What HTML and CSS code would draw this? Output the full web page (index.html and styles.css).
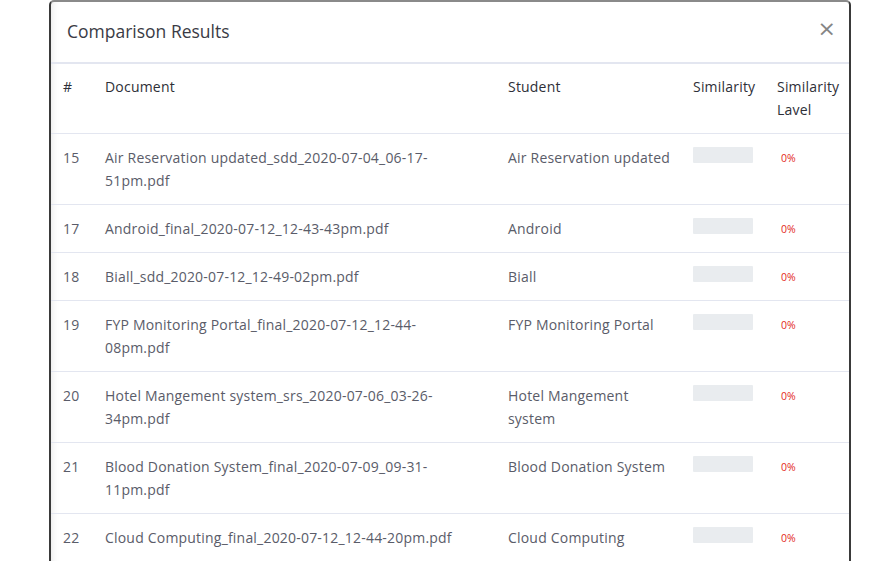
FILE: index.html
```html
<!DOCTYPE html>
<html>
<head>
<meta charset="utf-8">
<link rel="stylesheet" href="styles.css">
</head>
<body>
<div class="modal">
  <div class="modal-header">
    <h5 class="modal-title">Comparison Results</h5>
    <button class="close" type="button">&times;</button>
  </div>
  <table class="results">
    <colgroup>
      <col class="c-num"><col class="c-doc"><col class="c-stu"><col class="c-sim"><col class="c-lvl">
    </colgroup>
    <thead>
      <tr><th>#</th><th>Document</th><th>Student</th><th>Similarity</th><th>Similarity Lavel</th></tr>
    </thead>
    <tbody>
      <tr><td>15</td><td class="doc">Air Reservation updated_sdd_2020-07-04_06-17-51pm.pdf</td><td class="stu">Air Reservation updated</td><td><div class="bar"></div></td><td><div class="pct">0%</div></td></tr>
      <tr><td>17</td><td class="doc">Android_final_2020-07-12_12-43-43pm.pdf</td><td class="stu">Android</td><td><div class="bar"></div></td><td><div class="pct">0%</div></td></tr>
      <tr><td>18</td><td class="doc">Biall_sdd_2020-07-12_12-49-02pm.pdf</td><td class="stu">Biall</td><td><div class="bar"></div></td><td><div class="pct">0%</div></td></tr>
      <tr><td>19</td><td class="doc">FYP Monitoring Portal_final_2020-07-12_12-44-08pm.pdf</td><td class="stu">FYP Monitoring Portal</td><td><div class="bar"></div></td><td><div class="pct">0%</div></td></tr>
      <tr><td>20</td><td class="doc">Hotel Mangement system_srs_2020-07-06_03-26-34pm.pdf</td><td class="stu">Hotel Mangement system</td><td><div class="bar"></div></td><td><div class="pct">0%</div></td></tr>
      <tr><td>21</td><td class="doc">Blood Donation System_final_2020-07-09_09-31-11pm.pdf</td><td class="stu">Blood Donation System</td><td><div class="bar"></div></td><td><div class="pct">0%</div></td></tr>
      <tr><td>22</td><td class="doc">Cloud Computing_final_2020-07-12_12-44-20pm.pdf</td><td class="stu">Cloud Computing</td><td><div class="bar"></div></td><td><div class="pct">0%</div></td></tr>
    </tbody>
  </table>
</div>
</body>
</html>
```
FILE: styles.css
```css
html, body {
  margin: 0;
  padding: 0;
  background: #fff;
  overflow: hidden;
}
body {
  font-family: "Open Sans", "Liberation Sans", sans-serif;
  color: #5a5c69;
}
.modal {
  margin-left: 49px;
  width: 798px;
  border: 2px solid #3a3a3a;
  border-top-color: #8a8a8a;
  border-bottom: none;
  border-radius: 5px 5px 0 0;
  background: #fff;
  height: 600px;
  box-shadow: inset 8px 0 8px -8px rgba(0,0,0,0.12);
}
.modal-header {
  display: flex;
  align-items: center;
  justify-content: space-between;
  padding: 15px 13px 16px 16px;
  border-bottom: 2px solid #e3e6f0;
  height: 29px;
}
.modal-title {
  margin: 0;
  font-size: 17.5px;
  font-weight: 400;
  color: #3a3b45;
  line-height: 29px;
}
.close {
  background: none;
  border: none;
  padding: 0 0 5px 0;
  font-family: "DejaVu Sans", sans-serif;
  font-size: 22px;
  line-height: 22px;
  color: #858585;
  cursor: pointer;
}
.results {
  width: 798px;
  border-collapse: collapse;
  table-layout: fixed;
  font-size: 14px;
  letter-spacing: 0.2px;
  line-height: 23px;
}
.c-num { width: 42px; }
.c-doc { width: 403px; }
.c-stu { width: 185px; }
.c-sim { width: 84px; }
.c-lvl { width: 84px; }
.results th, .results td {
  padding: 12px;
  text-align: left;
  vertical-align: top;
  border-bottom: 1px solid #e3e6f0;
}
.results th {
  font-weight: 400;
  color: #2e2f37;
  padding-top: 11px;
}
.results td {
  color: #5a5c69;
}
.results td.doc {
  padding-right: 21px;
}
.results td.stu {
  padding-right: 6px;
}
.bar {
  width: 60px;
  height: 16px;
  margin-top: 1px;
  background: #e9ecef;
  border-radius: 1px;
}
.pct {
  padding: 1px 0 0 4px;
  font-size: 10.5px;
  line-height: 22px;
  letter-spacing: 0;
  color: #e3281a;
}
```
